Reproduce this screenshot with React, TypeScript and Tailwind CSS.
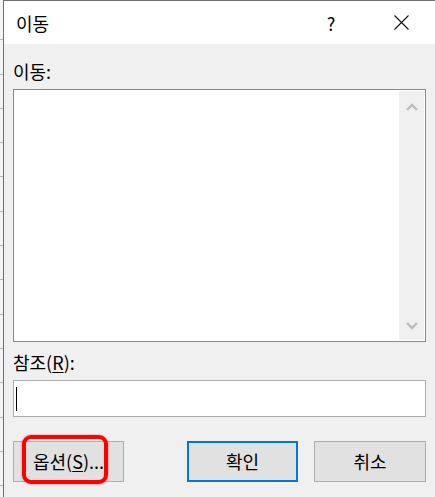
import React from "react";

const font = { fontFamily: '"Noto Sans CJK KR", "Noto Sans", sans-serif' };

function Chevron({ down }: { down?: boolean }) {
  return (
    <svg width="12" height="8" viewBox="0 0 12 8" className={down ? "rotate-180" : ""}>
      <path d="M1 7 L6 2 L11 7" fill="none" stroke="#bdbdbd" strokeWidth="2.4" />
    </svg>
  );
}

export default function App() {
  const rows = Array.from({ length: 15 });
  return (
    <div
      className="flex h-[497px] w-[435px] overflow-hidden bg-white text-black"
      style={font}
    >
      {/* excel grid behind the dialog */}
      <div className="flex w-[3px] shrink-0 flex-col bg-[#f4f4f4] pt-[6px]">
        {rows.map((_, i) => (
          <div key={i} className="h-[34.3px] shrink-0 border-b border-[#b8b8b8]" />
        ))}
      </div>

      <div className="flex flex-1 flex-col border-l border-t border-[#6f6f6f]">
        {/* title bar */}
        <div className="flex h-[43px] items-center bg-white">
          <span className="pl-[12px] text-[18px] leading-none">이동</span>
          <span className="ml-auto w-[20px] text-center text-[18px] leading-none">?</span>
          <span className="ml-[50px] mr-[24px] flex h-[20px] w-[20px] items-center justify-center">
            <svg width="15" height="15" viewBox="0 0 15 15">
              <path d="M0.5 0.5 L14.5 14.5 M14.5 0.5 L0.5 14.5" stroke="#111" strokeWidth="1.1" />
            </svg>
          </span>
        </div>

        {/* body */}
        <div className="flex flex-1 flex-col bg-[#f0f0f0] px-[9px] pt-[17px]">
          <div className="text-[18px] leading-[20px]">이동:</div>

          <div className="mt-[8px] flex h-[253px] border border-[#858a93] bg-white p-[1px]">
            <div className="flex-1" />
            <div className="flex w-[25px] flex-col items-center justify-between bg-[#f0f0f0] pb-[10px] pt-[12px]">
              <Chevron />
              <Chevron down />
            </div>
          </div>

          <div className="mt-[10px] text-[18px] leading-[20px]">
            참조(<span className="underline underline-offset-2">R</span>):
          </div>

          <div className="mt-[8px] flex h-[37px] items-center border border-[#adadad] bg-white pl-[2px]">
            <div className="h-[24px] w-[1px] bg-black" />
          </div>

          <div className="mt-[24px] flex items-start justify-between">
            <div className="relative">
              <button className="flex h-[41px] w-[111px] items-center justify-center border border-[#adadad] bg-[#e1e1e1] text-[18px]">
                옵션(<span className="underline underline-offset-2">S</span>)...
              </button>
              <div className="pointer-events-none absolute left-[9px] top-[-6px] h-[49px] w-[86px] rounded-[9px] border-4 border-[#ff0000] shadow-[0_0_2px_rgba(255,0,0,0.6)]" />
            </div>
            <div className="flex gap-[16px]">
              <button className="flex h-[41px] w-[111px] items-center justify-center border-2 border-[#0078d7] bg-[#e1e1e1] text-[18px]">
                확인
              </button>
              <button className="flex h-[41px] w-[112px] items-center justify-center border border-[#adadad] bg-[#e1e1e1] text-[18px]">
                취소
              </button>
            </div>
          </div>
        </div>
      </div>
    </div>
  );
}
